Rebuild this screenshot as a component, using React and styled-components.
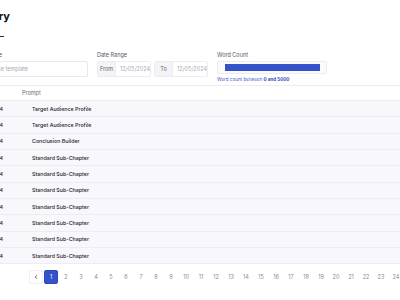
import styled, { createGlobalStyle } from 'styled-components';

const GlobalStyle = createGlobalStyle`
  html, body {
    margin: 0;
    padding: 0;
    background: #ffffff;
    overflow: hidden;
  }
  body {
    font-family: Inter, "Noto Sans", sans-serif;
    color: #1c1c24;
  }
`;

const Viewport = styled.div`
  width: 400px;
  height: 300px;
  overflow: hidden;
`;

const Page = styled.div`
  width: 520px;
  margin-left: -60px;
  padding-top: 8px;
`;

const Title = styled.h1`
  margin: 0 0 0 ${p => p.$indent}px;
  font-size: 11px;
  font-weight: 700;
  line-height: 16px;
  color: #111117;
  white-space: nowrap;
`;

const TabLine = styled.div`
  margin: 12px 0 0 ${p => p.$indent}px;
  width: 28px;
  height: 1px;
  background: #2a2a33;
`;

const Filters = styled.div`
  display: flex;
  gap: 9px;
  margin-top: 15px;
  padding-left: ${p => p.$indent}px;
  padding-bottom: 2px;
  border-bottom: 1px solid #ececf1;
`;

const Field = styled.div`
  display: flex;
  flex-direction: column;
  gap: 3px;
`;

const Label = styled.div`
  font-size: 5.5px;
  line-height: 6px;
  color: #55555f;
  white-space: nowrap;
`;

const TextInput = styled.div`
  width: ${p => p.$width}px;
  height: 16px;
  box-sizing: border-box;
  border: 1px solid #e8e8ee;
  border-radius: 2px;
  padding-left: 5px;
  display: flex;
  align-items: center;
  font-size: 5.5px;
  color: #a7a7b2;
  white-space: nowrap;
`;

const DateGroup = styled.div`
  display: flex;
  gap: 3px;
`;

const DateBox = styled.div`
  width: 54px;
  height: 16px;
  box-sizing: border-box;
  border: 1px solid #ececf1;
  border-radius: 2px;
  display: flex;
  align-items: stretch;
  font-size: 5.5px;
  color: #a9a9b4;
  white-space: nowrap;
  overflow: hidden;
`;

const DatePrefix = styled.div`
  width: 17px;
  flex: none;
  background: #f4f4f8;
  color: #666670;
  display: flex;
  align-items: center;
  justify-content: center;
  border-right: 1px solid #ececf1;
`;

const DateValue = styled.div`
  padding-left: 4px;
  display: flex;
  align-items: center;
`;

const SliderBox = styled.div`
  width: 110px;
  height: 13px;
  box-sizing: border-box;
  border: 1px solid #ececf1;
  border-radius: 2px;
  background: #fbfbfd;
  padding: 2px 6px 0 7px;
`;

const SliderBar = styled.div`
  height: 7px;
  background: #3553c9;
`;

const Hint = styled.div`
  font-size: 4.6px;
  line-height: 6px;
  color: #4a62c6;
  white-space: nowrap;

  b {
    font-weight: 700;
    color: #2b45b5;
  }
`;

const Table = styled.div`
  display: flex;
  flex-direction: column;
`;

const Row = styled.div`
  display: grid;
  grid-template-columns: 92px 1fr;
  height: ${p => (p.$head ? 15 : 16.33)}px;
  align-items: center;
  box-sizing: border-box;
  border-bottom: 1px solid #ececf2;
  background: ${p => (p.$head ? '#ffffff' : '#f8f8fc')};
  font-size: ${p => (p.$head ? 5.5 : 5.3)}px;
  font-weight: ${p => (p.$head ? 400 : 500)};
  color: ${p => (p.$head ? '#6b6b76' : '#26262e')};
`;

const DateCell = styled.div`
  white-space: nowrap;
  text-align: right;
  padding-right: ${p => (p.$head ? 39 : 29)}px;
`;

const PromptCell = styled.div`
  white-space: nowrap;
  margin-left: ${p => (p.$head ? -10 : 0)}px;
`;

const Pager = styled.div`
  display: flex;
  align-items: center;
  margin: 6px 0 0 ${p => p.$indent}px;
`;

const PageBtn = styled.div`
  width: 14px;
  height: 14px;
  flex: none;
  box-sizing: border-box;
  display: flex;
  align-items: center;
  justify-content: center;
  font-size: 5.5px;
  border-radius: 2px;
  margin-right: 1px;
  color: ${p => (p.$active ? '#ffffff' : '#8a8a95')};
  background: ${p => (p.$active ? '#3553c9' : 'transparent')};
  border: 1px solid ${p => (p.$active ? '#2d49bd' : p.$nav ? '#efeff3' : 'transparent')};
`;

const rows = [
  'Target Audience Profile',
  'Target Audience Profile',
  'Conclusion Builder',
  'Standard Sub-Chapter',
  'Standard Sub-Chapter',
  'Standard Sub-Chapter',
  'Standard Sub-Chapter',
  'Standard Sub-Chapter',
  'Standard Sub-Chapter',
  'Standard Sub-Chapter',
];

const pages = Array.from({ length: 24 }, (_, i) => i + 1);

const Chevron = () => (
  <svg width="6" height="6" viewBox="0 0 24 24" fill="none" stroke="#2a2a33" strokeWidth="3" strokeLinecap="round" strokeLinejoin="round">
    <path d="M15 18l-6-6 6-6" />
  </svg>
);

export default function App() {
  return (
    <Viewport>
      <GlobalStyle />
      <Page>
        <Title $indent={-11}>Prompt History</Title>
        <TabLine $indent={36} />
        <Filters $indent={38}>
          <Field>
            <Label>Template</Label>
            <TextInput $width={110}>Choose template</TextInput>
          </Field>
          <Field>
            <Label>Date Range</Label>
            <DateGroup>
              <DateBox>
                <DatePrefix>From</DatePrefix>
                <DateValue>12/05/2024</DateValue>
              </DateBox>
              <DateBox>
                <DatePrefix>To</DatePrefix>
                <DateValue>12/05/2024</DateValue>
              </DateBox>
            </DateGroup>
          </Field>
          <Field>
            <Label>Word Count</Label>
            <SliderBox>
              <SliderBar />
            </SliderBox>
            <Hint>Word count between <b>0 and 5000</b></Hint>
          </Field>
        </Filters>
        <Table>
          <Row $head>
            <DateCell $head>Date</DateCell>
            <PromptCell $head>Prompt</PromptCell>
          </Row>
          {rows.map((r, i) => (
            <Row key={i}>
              <DateCell>12/05/2024</DateCell>
              <PromptCell>{r}</PromptCell>
            </Row>
          ))}
        </Table>
        <Pager $indent={89}>
          <PageBtn $nav><Chevron /></PageBtn>
          {pages.map(n => (
            <PageBtn key={n} $active={n === 1}>{n}</PageBtn>
          ))}
        </Pager>
      </Page>
    </Viewport>
  );
}
